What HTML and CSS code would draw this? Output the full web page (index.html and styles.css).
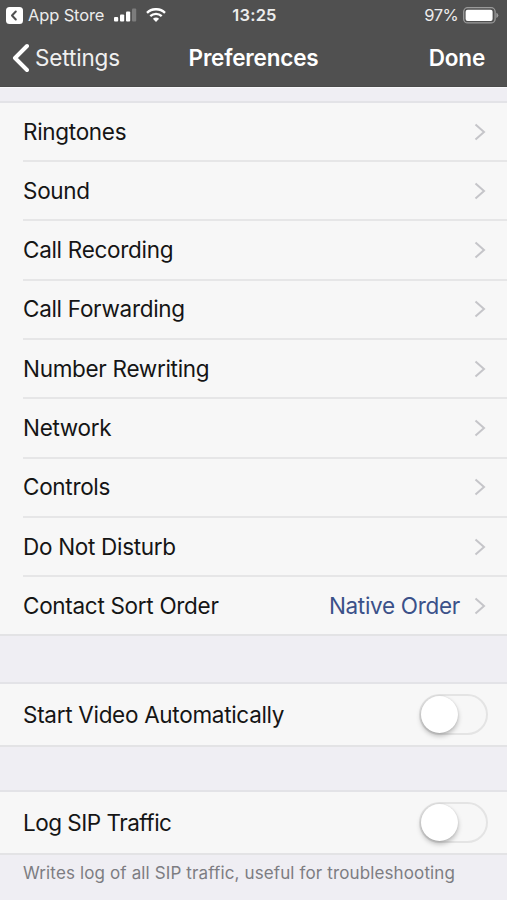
FILE: index.html
```html
<!DOCTYPE html>
<html lang="en">
<head>
    <meta charset="UTF-8">
    <meta name="viewport" content="width=device-width, initial-scale=1.0">
    <title>Preferences</title>
    <link rel="stylesheet" href="styles.css">
</head>
<body>
    <header class="header">
        <div class="status-bar">
            <div class="status-left">
                <svg class="back-app" width="17" height="17" viewBox="0 0 17 17">
                    <rect width="17" height="17" rx="3.5" fill="#fff"/>
                    <path d="M9.8 4.5 L6 8.5 L9.8 12.5" fill="none" stroke="#505050" stroke-width="2" stroke-linecap="round" stroke-linejoin="round"/>
                </svg>
                <span class="app-name">App Store</span>
                <svg class="signal" width="23" height="14" viewBox="0 0 23 14">
                    <rect x="0" y="9" width="4.2" height="4.5" rx="1" fill="#fff"/>
                    <rect x="6" y="6.5" width="4.2" height="7" rx="1" fill="#fff"/>
                    <rect x="12" y="3.5" width="4.2" height="10" rx="1" fill="#fff"/>
                    <rect x="18" y="0.5" width="4.2" height="13" rx="1" fill="#7c7c7c"/>
                </svg>
                <svg class="wifi" width="20" height="14" viewBox="0 0 20 14">
                    <path d="M1 4.8 A13 13 0 0 1 19 4.8" fill="none" stroke="#fff" stroke-width="2.4"/>
                    <path d="M4.3 8.2 A8.2 8.2 0 0 1 15.7 8.2" fill="none" stroke="#fff" stroke-width="2.3"/>
                    <path d="M6.9 10.8 A4.6 4.6 0 0 1 13.1 10.8 L10 13.9 Z" fill="#fff"/>
                </svg>
            </div>
            <span class="clock">13:25</span>
            <div class="status-right">
                <span class="percent">97%</span>
                <svg class="battery" width="36" height="17" viewBox="0 0 36 17">
                    <rect x="0.7" y="0.7" width="31.4" height="15.2" rx="4" fill="none" stroke="#9a9a9a" stroke-width="1.3"/>
                    <rect x="2.6" y="2.7" width="27" height="11.2" rx="2" fill="#fff"/>
                    <path d="M33.3 5.7 Q35.3 6.3 35.3 8.3 Q35.3 10.3 33.3 10.9 Z" fill="#9a9a9a"/>
                </svg>
            </div>
        </div>
        <nav class="nav-bar">
            <div class="nav-back">
                <svg width="17" height="30" viewBox="0 0 17 30">
                    <path d="M15 3 L3 15 L15 27" fill="none" stroke="#fff" stroke-width="4" stroke-linecap="round" stroke-linejoin="round"/>
                </svg>
                <span class="back-label">Settings</span>
            </div>
            <h1 class="nav-title">Preferences</h1>
            <span class="nav-done">Done</span>
        </nav>
    </header>

    <main class="content">
        <ul class="group menu">
            <li class="row"><span class="label">Ringtones</span><svg class="chevron" viewBox="0 0 12 18"><path d="M1.5 1.5 L10 9 L1.5 16.5"/></svg></li>
            <li class="row"><span class="label">Sound</span><svg class="chevron" viewBox="0 0 12 18"><path d="M1.5 1.5 L10 9 L1.5 16.5"/></svg></li>
            <li class="row"><span class="label">Call Recording</span><svg class="chevron" viewBox="0 0 12 18"><path d="M1.5 1.5 L10 9 L1.5 16.5"/></svg></li>
            <li class="row"><span class="label">Call Forwarding</span><svg class="chevron" viewBox="0 0 12 18"><path d="M1.5 1.5 L10 9 L1.5 16.5"/></svg></li>
            <li class="row"><span class="label">Number Rewriting</span><svg class="chevron" viewBox="0 0 12 18"><path d="M1.5 1.5 L10 9 L1.5 16.5"/></svg></li>
            <li class="row"><span class="label">Network</span><svg class="chevron" viewBox="0 0 12 18"><path d="M1.5 1.5 L10 9 L1.5 16.5"/></svg></li>
            <li class="row"><span class="label">Controls</span><svg class="chevron" viewBox="0 0 12 18"><path d="M1.5 1.5 L10 9 L1.5 16.5"/></svg></li>
            <li class="row"><span class="label">Do Not Disturb</span><svg class="chevron" viewBox="0 0 12 18"><path d="M1.5 1.5 L10 9 L1.5 16.5"/></svg></li>
            <li class="row"><span class="label">Contact Sort Order</span><span class="value">Native Order</span><svg class="chevron" viewBox="0 0 12 18"><path d="M1.5 1.5 L10 9 L1.5 16.5"/></svg></li>
        </ul>

        <div class="group switch-row video">
            <span class="label">Start Video Automatically</span>
            <div class="switch"><div class="knob"></div></div>
        </div>

        <div class="group switch-row sip">
            <span class="label">Log SIP Traffic</span>
            <div class="switch"><div class="knob"></div></div>
        </div>
        <p class="note">Writes log of all SIP traffic, useful for troubleshooting</p>
    </main>
</body>
</html>
```

FILE: styles.css
```css
* {
    box-sizing: border-box;
}

body {
    margin: 0;
    height: 900px;
    overflow: hidden;
    background-color: #efeef3;
    font-family: Inter, "Liberation Sans", sans-serif;
    color: #151515;
}

.header {
    height: 87px;
    background-color: #505050;
    border-bottom: 1px solid #4b4b4b;
    color: #fff;
}

.status-bar {
    display: grid;
    grid-template-columns: 1fr auto 1fr;
    align-items: center;
    height: 30px;
    padding: 0 8px 0 6px;
    font-size: 16.5px;
    color: #ececec;
}

.status-left,
.status-right {
    display: flex;
    align-items: center;
}

.status-right {
    justify-content: flex-end;
}

.app-name {
    margin-left: 5px;
    letter-spacing: -0.15px;
}

.signal {
    margin-left: 10px;
}

.wifi {
    margin-left: 9px;
}

.clock {
    margin-left: 4px;
    font-weight: 600;
    letter-spacing: 0.2px;
}

.percent {
    letter-spacing: -0.6px;
}

.battery {
    margin-left: 5px;
}

.nav-bar {
    display: grid;
    grid-template-columns: 1fr auto 1fr;
    align-items: center;
    height: 55px;
    padding: 0 22px 0 12px;
    font-size: 22.5px;
}

.nav-back {
    display: flex;
    align-items: center;
    gap: 6px;
}

.back-label {
    color: #f0f0f0;
    letter-spacing: -0.15px;
}

.nav-title {
    margin: 0 0 0 10px;
    font-size: 22.5px;
    font-weight: 600;
    letter-spacing: -0.2px;
}

.nav-done {
    font-weight: 600;
    text-align: right;
    letter-spacing: -0.2px;
}

.content {
    padding-top: 13px;
    border-top: 1px solid #f8f8fa;
}

.group {
    margin: 0;
    background-color: #f7f7f7;
    border-top: 2px solid #e3e3e7;
    border-bottom: 2px solid #e3e3e5;
}

.menu {
    height: 535px;
    padding: 0 0 0 23px;
    list-style: none;
    display: grid;
    grid-template-rows: 59px repeat(7, 59.35px) 1fr;
}

.row {
    display: flex;
    align-items: center;
    padding-right: 21px;
    border-bottom: 2px solid #e6e6e7;
}

.row:last-child {
    border-bottom: none;
}

.label,
.value {
    font-size: 22.5px;
    line-height: 28px;
    letter-spacing: -0.3px;
}

.label {
    flex: 1;
}

.value {
    margin-right: 14px;
    color: #3b5189;
}

.chevron {
    width: 12px;
    height: 18px;
    fill: none;
    stroke: #c5c5c9;
    stroke-width: 2;
}

.switch-row {
    display: flex;
    align-items: center;
    height: 65px;
    margin-top: 46px;
    padding: 0 19px 0 23px;
}

.sip {
    margin-top: 43px;
}

.sip .label {
    letter-spacing: -0.5px;
}

.switch {
    width: 69px;
    height: 41px;
    border: 2px solid #e4e4e4;
    border-radius: 21px;
}

.knob {
    width: 37px;
    height: 37px;
    border-radius: 50%;
    background-color: #fff;
    box-shadow: 0 3px 5px rgba(0, 0, 0, 0.25), 0 0 2px rgba(0, 0, 0, 0.12);
}

.note {
    margin: 6px 23px 0;
    font-size: 17px;
    line-height: 24px;
    letter-spacing: 0.13px;
    color: #7d7d82;
    white-space: nowrap;
}
```
